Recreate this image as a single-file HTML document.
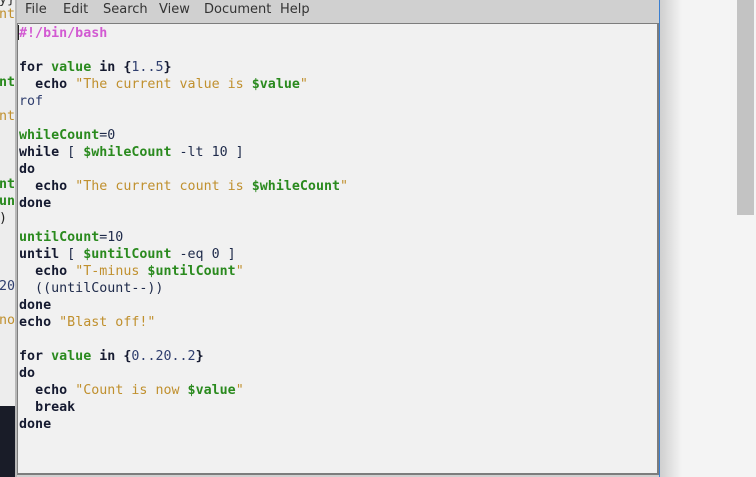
<!DOCTYPE html>
<html><head><meta charset="utf-8"><style>
*{margin:0;padding:0;box-sizing:border-box}
body{width:756px;height:477px;overflow:hidden;background:#f4f4f4;position:relative;font-family:"DejaVu Sans Mono","Liberation Mono",monospace}
.left{position:absolute;left:0;top:0;width:16px;height:477px;background:#ededed;overflow:hidden;font-size:13.33px;line-height:17px}
.left .dark{position:absolute;left:0;top:406px;width:16px;height:71px;background:#191c28}
.left span{position:absolute;left:-1px;white-space:pre}
.win{position:absolute;left:15px;top:0;width:645px;height:477px;background:#d0d0d0;border-left:2px solid #b8b8b8}
.menu{position:absolute;left:0;top:0;height:23px;font-family:"DejaVu Sans","Liberation Sans",sans-serif;font-size:13px;color:#333;line-height:17px}
.menu span{position:absolute;top:1px;white-space:nowrap}
.ed{position:absolute;left:0;top:23px;width:642px;height:452px;background:#f1f1f1;border:1px solid #7d7d7d;border-width:1px 2px 2px 1px}
pre{position:absolute;left:1px;top:1px;font-family:"DejaVu Sans Mono",monospace;font-size:13.33px;line-height:17px;color:#1e2a4a}
b{font-weight:bold;color:#151a30}
.g{color:#2a8a1e;font-weight:bold}
.s{color:#c0902e}
.c{color:#d25ad2;font-weight:bold}
.n{color:#2f3e6e}
.blue{position:absolute;left:659px;top:0;width:1px;height:477px;background:#3b7fd0}
.shadow{position:absolute;left:660px;top:0;width:22px;height:477px;background:linear-gradient(to right,#cfcfcf,#f4f4f4)}
.sb{position:absolute;left:737px;top:0;width:17px;height:215px;background:#c3c3c3}
.cur{position:absolute;left:18px;top:25px;width:1px;height:15px;background:#222}
</style></head><body>
<div class="left">
<span style="top:-9px;color:#333">y}</span>
<span style="top:6px;color:#c0902e">nt</span>
<span style="top:74px;color:#2a8a1e;font-weight:bold">nt</span>
<span style="top:108px;color:#c0902e">nt</span>
<span style="top:176px;color:#2a8a1e;font-weight:bold">nt</span>
<span style="top:193px;color:#2a8a1e;font-weight:bold">un</span>
<span style="top:210px;color:#222">)</span>
<span style="top:278px;color:#2f3e6e">20</span>
<span style="top:312px;color:#c0902e">no</span>
<div class="dark"></div>
</div>
<div class="win">
<div class="menu">
<span style="left:8px">File</span>
<span style="left:46px">Edit</span>
<span style="left:86px">Search</span>
<span style="left:142px">View</span>
<span style="left:187px">Document</span>
<span style="left:263px">Help</span>
</div>
<div class="ed">
<pre><span class="c">#!/bin/bash</span>

<b>for</b> <span class="g">value</span> <b>in</b> <b>{</b><span class="n">1..5</span><b>}</b>
  <b>echo</b> <span class="s">"The current value is </span><span class="g">$value</span><span class="s">"</span>
<span class="n">rof</span>

<span class="g">whileCount</span>=0
<b>while</b> [ <span class="g">$whileCount</span> -lt 10 ]
<b>do</b>
  <b>echo</b> <span class="s">"The current count is </span><span class="g">$whileCount</span><span class="s">"</span>
<b>done</b>

<span class="g">untilCount</span>=10
<b>until</b> [ <span class="g">$untilCount</span> -eq 0 ]
  <b>echo</b> <span class="s">"T-minus </span><span class="g">$untilCount</span><span class="s">"</span>
  ((untilCount--))
<b>done</b>
<b>echo</b> <span class="s">"Blast off!"</span>

<b>for</b> <span class="g">value</span> <b>in</b> <b>{</b><span class="n">0..20..2</span><b>}</b>
<b>do</b>
  <b>echo</b> <span class="s">"Count is now </span><span class="g">$value</span><span class="s">"</span>
  <b>break</b>
<b>done</b></pre>
</div>
</div>
<div class="cur"></div>
<div class="blue"></div>
<div class="shadow"></div>
<div class="sb"></div>
</body></html>
